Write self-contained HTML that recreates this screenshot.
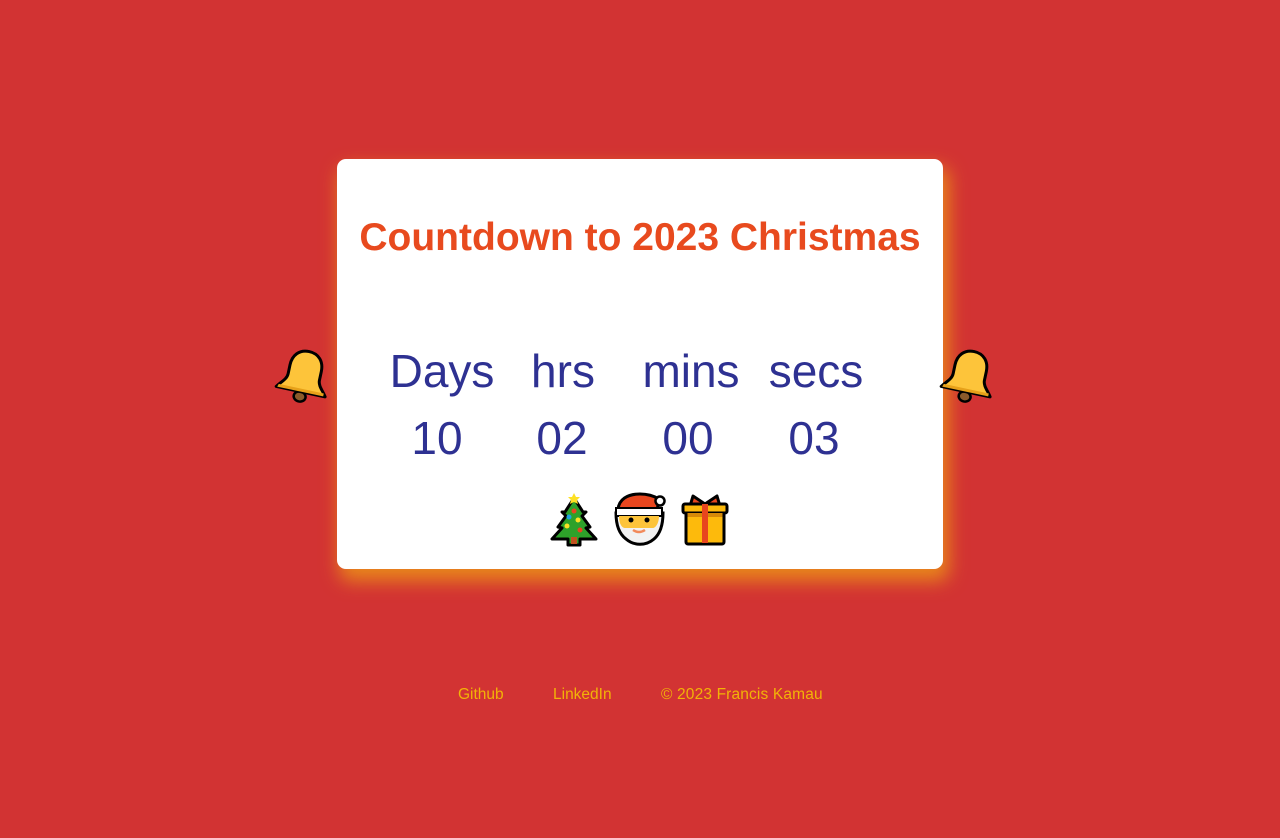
<!DOCTYPE html>
<html><head><meta charset="utf-8"><style>
body{margin:0;width:1280px;height:838px;background:#d23333;font-family:"Liberation Sans",Arial,sans-serif;position:relative;overflow:hidden}
.card{position:absolute;left:337px;top:159px;width:606px;height:410px;background:#fff;border-radius:9px;box-shadow:4px 10px 18px 2px #e8861c}
h1{position:absolute;left:0;right:0;top:216px;margin:0;text-align:center;font-size:39px;font-weight:bold;color:#e84a1e;line-height:44px}
.t{position:absolute;color:#2e3192;font-size:46px;line-height:50px;text-align:center;width:140px}
.f{position:absolute;top:686px;color:#f2b307;font-size:15.5px;line-height:18px}
svg{position:absolute}
</style></head><body>
<div class="card"></div>
<h1>Countdown to 2023 Christmas</h1>
<div class="t" style="left:372px;top:346px">Days</div>
<div class="t" style="left:493px;top:346px">hrs</div>
<div class="t" style="left:621px;top:346px">mins</div>
<div class="t" style="left:746px;top:346px">secs</div>
<div class="t" style="left:367px;top:413px">10</div>
<div class="t" style="left:492px;top:413px">02</div>
<div class="t" style="left:618px;top:413px">00</div>
<div class="t" style="left:744px;top:413px">03</div>

<svg style="left:274px;top:346px" width="60" height="62" viewBox="0 0 60 62"><g transform="rotate(12 30 30)"><ellipse cx="30" cy="51" rx="6" ry="5" fill="#8b5a2b" stroke="#000" stroke-width="2.5"/><path d="M30 5c-10 0-16 7-16 17v9c0 6-6 10-9 15h50c-3-5-9-9-9-15v-9c0-10-6-17-16-17z" fill="#fdc43a" stroke="#000" stroke-width="3" stroke-linejoin="round"/><path d="M7 43h46v3H6z" fill="#e7a11a"/></g></svg>
<svg style="left:939px;top:346px" width="60" height="62" viewBox="0 0 60 62"><g transform="rotate(12 30 30)"><ellipse cx="30" cy="51" rx="6" ry="5" fill="#8b5a2b" stroke="#000" stroke-width="2.5"/><path d="M30 5c-10 0-16 7-16 17v9c0 6-6 10-9 15h50c-3-5-9-9-9-15v-9c0-10-6-17-16-17z" fill="#fdc43a" stroke="#000" stroke-width="3" stroke-linejoin="round"/><path d="M7 43h46v3H6z" fill="#e7a11a"/></g></svg>

<svg style="left:549px;top:492px" width="50" height="56" viewBox="0 0 50 56"><path d="M25 6l-9 14-3 0 4 4-8 11 4 1-10 11h16v6h12v-6h16l-10-11 4-1-8-11 4-4h-3z" fill="#2ea12a" stroke="#000" stroke-width="3" stroke-linejoin="round"/><rect x="22" y="45" width="6" height="7" fill="#c0521f"/><path d="M25 1l2 4 4 0-3 3 1 4-4-2-4 2 1-4-3-3 4 0z" fill="#fde024"/><circle cx="25" cy="19" r="2.5" fill="#e8461e"/><circle cx="20" cy="25" r="2.5" fill="#1ca3e0"/><circle cx="29" cy="28" r="2.5" fill="#fde024"/><circle cx="18" cy="34" r="2.5" fill="#fde024"/><circle cx="31" cy="38" r="2.5" fill="#e8461e"/></svg>
<svg style="left:610px;top:491px" width="58" height="58" viewBox="0 0 58 58"><path d="M6 22c0 10 2 20 10 26 8 7 20 7 28 0 7-6 9-16 9-26z" fill="#f2f2f2" stroke="#000" stroke-width="3"/><path d="M8 20C8 8 18 3 30 3c8 0 14 2 19 5l-2 12z" fill="#e8461e" stroke="#000" stroke-width="3"/><circle cx="50" cy="10" r="4.5" fill="#fff" stroke="#000" stroke-width="2.5"/><path d="M6 17h46v8H6z" fill="#fff" stroke="#000" stroke-width="2"/><path d="M9 25h40c0 8-4 12-6 12H15c-3 0-6-4-6-12z" fill="#fdc43a"/><circle cx="21" cy="29" r="2.5" fill="#000"/><circle cx="37" cy="29" r="2.5" fill="#000"/><path d="M23 39q6 4 12 0" stroke="#f28a5b" stroke-width="2.5" fill="none"/></svg>
<svg style="left:680px;top:492px" width="50" height="56" viewBox="0 0 50 56"><path d="M13 4l12 8 12-8 3 10H10z" fill="#e8461e" stroke="#000" stroke-width="3" stroke-linejoin="round"/><rect x="3" y="12" width="44" height="9" rx="2" fill="#fdba0c" stroke="#000" stroke-width="3"/><rect x="6" y="21" width="38" height="31" rx="2" fill="#fdba0c" stroke="#000" stroke-width="3"/><rect x="7.5" y="21" width="35" height="4" fill="#d68a08"/><rect x="22" y="12" width="6" height="39" fill="#e8461e"/></svg>

<div class="f" style="left:458px">Github</div>
<div class="f" style="left:553px">LinkedIn</div>
<div class="f" style="left:661px;letter-spacing:0.15px">© 2023 Francis Kamau</div>
</body></html>
